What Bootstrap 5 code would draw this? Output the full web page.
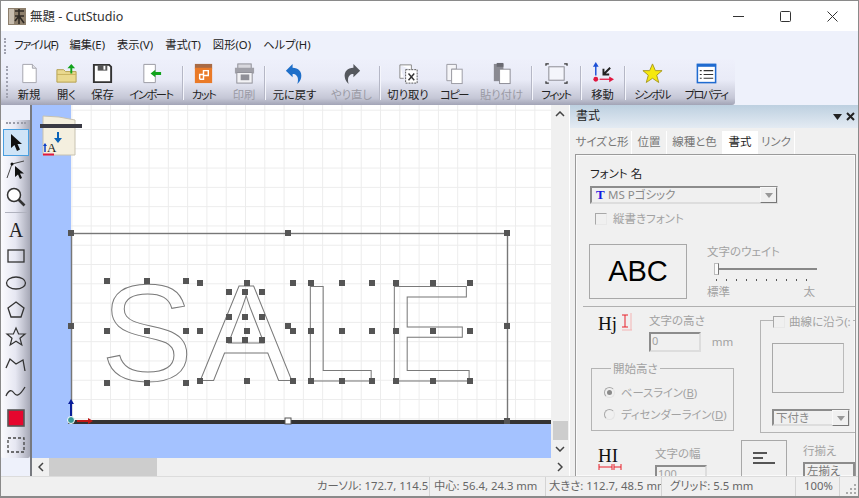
<!DOCTYPE html>
<html lang="ja">
<head>
    <meta charset="UTF-8">
    <title>無題 - CutStudio</title>
    <link href="https://cdn.jsdelivr.net/npm/bootstrap@5.3.2/dist/css/bootstrap.min.css" rel="stylesheet">
    <style>
        html, body { height: 100%; overflow: hidden; background: #fff; }
        body { font-family: "Noto Sans", "Noto Sans CJK JP", sans-serif; font-size: 11.5px; color: #222; line-height: 1.2; font-feature-settings: "palt"; }
        .app-win { width: 859px; height: 498px; border: 1px solid #8a8a8a; border-bottom-width: 2px; }
        .tight { letter-spacing: -1.5px; }

        .title-row { height: 30px; background: #fff; padding-left: 7px; font-size: 12.5px; color: #333; }
        .title-row .app-logo { margin-right: 4px; }
        .win-btns { margin-left: auto; margin-right: 2px; }
        .win-btn { width: 47px; height: 30px; }

        .menu-row { height: 28px; background: #eef1fb; padding-left: 13px; font-size: 11.3px; }
        .menu-row span { margin-right: 12px; }
        .menu-row .menu-first { letter-spacing: -1.200px; }
        .grip-v { width: 2px; height: 16px; margin: 0 2px; border-left: 2px dotted #a0a2b0; }
        .menu-row .grip-v { position: absolute; margin: 0; left: 4px; top: 38px; }

        .tool-zone { height: 46px; background: #eef1fb; }
        .tool-row { width: 734px; height: 46px; padding-left: 9px; padding-top: 3px; border-radius: 0 3px 3px 0; background: linear-gradient(#eef0fb 0%, #e9ebf7 45%, #c5c7d6 85%, #a2a4b6 100%); }
        .tool-row .grip-v { position: absolute; left: 4px; top: 66px; height: 32px; }
        .tool-btn { height: 43px; flex: none; font-size: 11.3px; }
        .tool-btn svg { height: 23px; width: 23px; margin-bottom: 3px; }
        .tool-btn.is-off { color: #9a9aa4; }
        .tool-sep { width: 1px; height: 34px; flex: none; margin-top: 4px; background: #b5b7c6; box-shadow: 1px 0 0 #f5f6fc; }
        .w35 { width: 35px; } .w36 { width: 36px; } .w37 { width: 37px; } .w38 { width: 38px; } .w40 { width: 40px; } .w41 { width: 41px; }
        .w43 { width: 43px; } .w48 { width: 48px; } .w54 { width: 54px; } .w55 { width: 55px; } .w56 { width: 56px; }
        .w59 { width: 59px; } .w62 { width: 62px; }

        .main-row { height: 371px; }
        .side-col { width: 31px; flex: none; border-right: 2px solid #77797f; background: #eef1fb; }
        .side-bar { margin-top: 15px; height: 338px; padding-top: 2px; background: linear-gradient(90deg, #fbfbfe 0%, #e6e7f2 50%, #a6a8b6 100%); border-radius: 0 0 2px 2px; }
        .side-btn { width: 26px; height: 27px; margin: 0 0 0 2px; flex: none; }
        .side-btn.is-on { background: #cfe4f7; border: 1px solid #4a9fe0; }
        .side-grip { width: 20px; height: 2px; margin: 0 0 5px 5px; border-top: 2px dotted #9a9ca8; }
        .side-sep { width: 22px; height: 1px; margin: 2px 0 2px 4px; background: #b0b2be; }

        .canvas-col { width: 537px; flex: none; background: #f0f0f0; }
        .canvas-top { height: 353px; }
        .draw-area { width: 519px; height: 353px; display: block; background: #fff; flex: none; }
        .scroll-v { width: 18px; flex: none; background: #f0f0f0; }
        .scroll-h { height: 18px; background: #f0f0f0; }
        .thumb-v { width: 15px; height: 19px; background: #cdcdcd; margin-top: auto; }
        .thumb-h { width: 108px; height: 18px; background: #cdcdcd; margin-left: -1px; }
        .arrow-btn { flex: none; width: 18px; height: 18px; }

        .prop-panel { width: 288px; flex: none; margin-left: 1px; background: #f0f0f0; font-size: 11.5px; overflow: hidden; }
        .prop-head { height: 23px; padding: 0 3px 0 6px; font-size: 12px; background: linear-gradient(#bdd0e0, #e4ebf3); }
        .prop-tabs { height: 26px; padding: 3px 0 0 3px; }
        .prop-tab { height: 23px; background: #f0f0f0; border-right: 1px solid #fff; color: #777; padding-top: 4px; text-align: center; }
        .prop-tab.is-on { background: #fff; color: #222; }
        .prop-body { height: 322px; margin-left: 5px; width: 281px; border: 1px solid #9a9a9a; border-bottom: 0; overflow: hidden; padding: 12px 0 0 14px; color: #a2a2a2; box-shadow: inset 0 0 0 1px #fafafa; }
        .dark-label { color: #222; margin-bottom: 5px; }
        .sunk-select { height: 18px; border: 2px solid #8c8c8c; border-right-color: #ddd; border-bottom-color: #ddd; background: #f0f0f0; padding-left: 2px; color: #8a8a8a; }
        .font-select { width: 188px; }
        .drop-btn { margin-left: auto; width: 17px; height: 16px; margin-right: -1px; border: 1px solid #f8f8f8; border-right-color: #777; border-bottom-color: #777; background: #f0f0f0; }
        .drop-btn i { display: block; margin: 5px auto 0; width: 0; height: 0; border: 4px solid transparent; border-top: 5px solid #999; border-bottom: 0; }
        .old-check { width: 12px; height: 12px; flex: none; border: 1px solid #a8a8a8; border-right-color: #e8e8e8; border-bottom-color: #e8e8e8; }
        .check-line { margin: 8px 0 0 5px; }
        .check-line .old-check { margin-right: 6px; }
        .abc-row { margin: 18px 0 0 -1px; }
        .abc-box { width: 98px; height: 55px; border: 1px solid #a8a8a8; flex: none; color: #000; font-family: "Liberation Sans", sans-serif; font-size: 29px; }
        .weight-col { width: 112px; margin-left: 20px; padding-top: 1px; }
        .weight-track { height: 2px; background: #888; margin: 10px 0 0 7px; position: relative; width: 103px; }
        .weight-knob { position: absolute; left: 0; top: -5px; width: 5px; height: 12px; background: #fbfbfb; border: 1px solid #bbb; border-right-color: #777; }
        .weight-ticks { height: 2px; margin: 9px 0 4px 9px; width: 100px; background: repeating-linear-gradient(90deg, #555 0 1px, transparent 1px 10px); }
        .panel-rule { height: 1px; width: 272px; margin: 7px 0 0 -7px; background: #b0b0b0; }
        .lower-grid { display: grid; grid-template-columns: 170px 100px; }
        .height-row { padding: 7px 0 0 8px; }
        .hj-icon { width: 36px; flex: none; margin: -4px 15px 0 0; }
        .num-box { width: 52px; height: 20px; border: 2px solid #8c8c8c; border-right-color: #ddd; border-bottom-color: #ddd; padding-left: 1px; margin-top: 4px; font-size: 11px; }
        .unit-text { margin: 21px 0 0 7px; }
        .old-group { border: 1px solid #b4b4b4; margin: 0; padding: 0; }
        .old-group legend { float: none; width: auto; font-size: 11.5px; line-height: 1; margin: 0 0 0 7px; padding: 0 2px; color: #a2a2a2; }
        .start-group { width: 143px; height: 68px; margin: 11px 0 0 1px; padding: 7px 0 0 12px; white-space: nowrap; }
        .radio-line { height: 22px; font-size: 11.3px; }
        .old-radio { width: 11px; height: 11px; border-radius: 50%; border: 1px solid #a8a8a8; border-right-color: #e4e4e4; border-bottom-color: #e4e4e4; margin-right: 6px; flex: none; position: relative; }
        .old-radio.is-set::after { content: ""; position: absolute; left: 2px; top: 2px; width: 5px; height: 5px; border-radius: 50%; background: #8a8a8a; }
        .curve-group { width: 130px; height: 113px; margin-top: 13px; margin-left: 0; padding: 22px 0 0 11px; position: relative; }
        .curve-head { position: absolute; left: 12px; top: -6px; background: #f0f0f0; padding-right: 2px; white-space: nowrap; }
        .curve-box { width: 72px; height: 50px; border: 1px solid #a8a8a8; border-right-color: #bbb; }
        .under-select { width: 78px; margin-top: 16px; height: 17px; }
        .lower-row { margin-top: 7px; }
        .hi-icon { width: 26px; margin: 2px 31px 0 8px; flex: none; }
        .width-col { width: 86px; padding-top: 7px; flex: none; }
        .align-btn { width: 46px; height: 60px; border: 1px solid #a8a8a8; flex: none; padding: 10px 0 0 11px; }
        .align-col { margin-left: 16px; padding-top: 4px; width: 60px; white-space: nowrap; }
        .sunk-mini { height: 20px; border: 2px solid #8c8c8c; border-bottom: 0; margin-top: 4px; padding-left: 2px; color: #777; }

        .status-row { height: 20px; background: #f0f0f0; border-top: 1px solid #dcdcdc; color: #666; font-size: 11.3px; white-space: nowrap; }
        .stat-cell { height: 100%; overflow: hidden; border-right: 1px solid #d4d4d4; flex: none; padding-top: 2px; }
        .stat-a { width: 429px; padding-left: 316px; }
        .stat-b { width: 116px; padding-left: 4px; }
        .stat-c { width: 116px; padding-left: 3px; }
        .stat-d { width: 134px; padding-left: 8px; }
        .stat-e { width: 44px; padding-left: 8px; }
        .size-grip { width: 12px; height: 12px; margin: 6px 0 0 5px; }
    </style>
</head>
<body>

    <div class="app-win d-flex flex-column">

        <!-- title bar -->
        <div class="title-row d-flex align-items-center">
            <svg class="app-logo" width="18" height="17" viewBox="0 0 18 17"><rect width="18" height="17" fill="#8d7f6c"/><rect x="1" y="1" width="5" height="15" fill="#c6bcae"/><path d="M7 3h9M11 1v15M7 8h9M7 13l4-5 5 7" stroke="#2f2a25" stroke-width="1.6" fill="none"/></svg>
            <span>無題 - CutStudio</span>
            <div class="win-btns d-flex">
                <div class="win-btn d-flex align-items-center justify-content-center"><svg width="11" height="11"><path d="M0 5.5h11" stroke="#333"/></svg></div>
                <div class="win-btn d-flex align-items-center justify-content-center"><svg width="11" height="11"><rect x=".5" y=".5" width="10" height="10" rx="1" fill="none" stroke="#333"/></svg></div>
                <div class="win-btn d-flex align-items-center justify-content-center"><svg width="11" height="11"><path d="M.5.5l10 10M10.5.5l-10 10" stroke="#333"/></svg></div>
            </div>
        </div>

        <!-- menu -->
        <div class="menu-row d-flex align-items-center">
            <div class="grip-v"></div>
            <span class="menu-first">ファイル(F)</span><span>編集(E)</span><span>表示(V)</span><span>書式(T)</span><span>図形(O)</span><span>ヘルプ(H)</span>
        </div>

        <!-- toolbar -->
        <div class="tool-zone">
            <div class="tool-row d-flex">
                <div class="grip-v"></div>
                <div class="tool-btn w38 d-flex flex-column align-items-center"><svg viewBox="0 0 24 24"><path d="M5 2.500h10l4 4v15H5z" fill="#fff" stroke="#a4a4ac"/><path d="M15 2.500v4h4" fill="#e4e4ea" stroke="#a4a4ac"/></svg>新規</div>
                <div class="tool-btn w37 d-flex flex-column align-items-center"><svg viewBox="0 0 24 24"><path d="M2 8h7l2 2h11v11H2z" fill="#ead98f" stroke="#b39f4e"/><path d="M2 13h20" stroke="#c8b25e"/><path d="M16 12V6.500h-3L17 2l4 4.500h-3V12z" fill="#12a31d"/></svg>開く</div>
                <div class="tool-btn w35 d-flex flex-column align-items-center"><svg viewBox="0 0 24 24"><path d="M3 3h16l2 2v16H3z" fill="#fff" stroke="#333" stroke-width="2"/><rect x="7" y="3" width="10" height="6" fill="#555"/><rect x="13" y="4" width="2" height="4" fill="#fff"/></svg>保存</div>
                <div class="tool-btn w62 d-flex flex-column align-items-center"><svg viewBox="0 0 24 24"><path d="M4 2.500h12v19H4z" fill="#fff" stroke="#9a9aa2"/><path d="M11 12l5-4v2.500h6v3h-6V16z" fill="#12a31d"/></svg><span class="tight">インポート</span></div>
                <div class="tool-sep"></div>
                <div class="tool-btn w41 d-flex flex-column align-items-center"><svg viewBox="0 0 24 24"><rect x="3" y="2" width="18" height="5" fill="#a86a45"/><rect x="3" y="6" width="18" height="16" fill="#ea7a28"/><path d="M8 18v-5h4v-4h5v5h-5M8 18h4v-5" fill="none" stroke="#fff" stroke-width="1.500"/></svg><span class="tight">カット</span></div>
                <div class="tool-btn w40 is-off d-flex flex-column align-items-center"><svg viewBox="0 0 24 24"><rect x="5" y="2" width="14" height="5" fill="#d8d8de" stroke="#8e8e96"/><rect x="2" y="6" width="20" height="6" fill="#a0a0a8"/><rect x="4" y="11" width="16" height="11" fill="#f2f2f5" stroke="#8e8e96"/><rect x="8" y="13" width="9" height="6" fill="#8f8f97"/></svg>印刷</div>
                <div class="tool-sep"></div>
                <div class="tool-btn w59 d-flex flex-column align-items-center"><svg viewBox="0 0 24 24"><path d="M3 9l7-7v4c6 0 10 4 9 10-.4 3-2 5-4 7 1-4 1-7-1-9-1-1-2-1.500-4-1.500V16z" fill="#1f6fc9"/></svg>元に戻す</div>
                <div class="tool-btn w55 is-off d-flex flex-column align-items-center"><svg viewBox="0 0 24 24"><path d="M21 9l-7-7v4C8 6 4 10 5 16c.4 3 2 5 4 7-1-4-1-7 1-9 1-1 2-1.500 4-1.500V16z" fill="#55585e"/></svg>やり直し</div>
                <div class="tool-sep"></div>
                <div class="tool-btn w56 d-flex flex-column align-items-center"><svg viewBox="0 0 24 24"><path d="M3 3h12v5M3 3v14h4" fill="#fff" stroke="#888"/><rect x="9" y="8" width="12" height="14" fill="#fff" stroke="#555" stroke-dasharray="2 1"/><path d="M12 12l6 7M18 12l-6 7" stroke="#333" stroke-width="1.500"/></svg><span>切り取り</span></div>
                <div class="tool-btn w36 d-flex flex-column align-items-center"><svg viewBox="0 0 24 24"><path d="M4 2.500h10v5H9v12H4z" fill="#f5f5f8" stroke="#9a9aa2"/><rect x="9" y="7.500" width="11" height="15" fill="#fff" stroke="#9a9aa2"/></svg><span class="tight">コピー</span></div>
                <div class="tool-btn w59 is-off d-flex flex-column align-items-center"><svg viewBox="0 0 24 24"><rect x="4" y="2" width="10" height="18" fill="#8a8a92"/><rect x="7" y="1" width="7" height="4" fill="#6a6a72"/><rect x="10" y="7.500" width="11" height="15" fill="#fff" stroke="#8a8a92"/></svg>貼り付け</div>
                <div class="tool-sep"></div>
                <div class="tool-btn w48 d-flex flex-column align-items-center"><svg viewBox="0 0 24 24"><rect x="4" y="5" width="16" height="14" fill="#f4f5fb" stroke="#8a8a92"/><path d="M1 4V2h3M20 2h3v2M1 20v2h3M20 22h3v-2" fill="none" stroke="#333" stroke-width="1.300"/></svg><span class="tight">フィット</span></div>
                <div class="tool-sep"></div>
                <div class="tool-btn w43 d-flex flex-column align-items-center"><svg viewBox="0 0 24 24"><path d="M5 14V4" stroke="#1b4fd6" stroke-width="1.500"/><path d="M5 0l-3 5h6z" fill="#1b4fd6"/><circle cx="5" cy="18" r="2.500" fill="#e0173f"/><path d="M9 18h11" stroke="#e0173f" stroke-width="1.300"/><path d="M24 18l-5-3v6z" fill="#e0173f"/><path d="M20 6l-6 6M13 7v6h6" fill="none" stroke="#222" stroke-width="2"/></svg>移動</div>
                <div class="tool-sep"></div>
                <div class="tool-btn w54 d-flex flex-column align-items-center"><svg viewBox="0 0 24 24"><path d="M12 2l3 7h7l-5.600 4.800 2.100 7.600L12 17l-6.500 4.400 2.100-7.600L2 9h7z" fill="#f6e90e" stroke="#a89a20"/></svg><span class="tight">シンボル</span></div>
                <div class="tool-btn w54 d-flex flex-column align-items-center"><svg viewBox="0 0 24 24"><rect x="2.500" y="2.500" width="19" height="19" fill="#fff" stroke="#1f6bd0" stroke-width="1.600"/><rect x="2" y="2" width="20" height="3" fill="#1f6bd0"/><path d="M5 9h2M9 9h10M5 13h2M9 13h10M5 17h2M9 17h10" stroke="#333" stroke-width="1.200"/></svg><span class="tight">プロパティ</span></div>
            </div>
        </div>

        <div class="main-row d-flex">
            <!-- left tool column -->
            <div class="side-col">
                <div class="side-bar d-flex flex-column">
                    <div class="side-grip"></div>
                    <div class="side-btn is-on d-flex align-items-center justify-content-center"><svg width="18" height="20" viewBox="0 0 18 20"><path d="M4 1v14l3.500-3 2.500 6 3-1.500-2.500-5.500H15z" fill="#111"/></svg></div>
                    <div class="side-btn d-flex align-items-center justify-content-center"><svg width="24" height="24" viewBox="0 0 24 24"><path d="M3 20L8 6l12-3" fill="none" stroke="#444"/><circle cx="8" cy="6" r="1.500" fill="#111"/><path d="M11 8v11l3-2.500 2 4.500 2-1-2-4.500h4z" fill="#111"/></svg></div>
                    <div class="side-btn d-flex align-items-center justify-content-center"><svg width="22" height="22" viewBox="0 0 22 22"><circle cx="9" cy="9" r="6.500" fill="#fff" stroke="#333" stroke-width="1.500"/><path d="M13.500 13.500l6 6" stroke="#333" stroke-width="2.600"/></svg></div>
                    <div class="side-sep"></div>
                    <div class="side-btn d-flex align-items-center justify-content-center"><svg width="24" height="24" viewBox="0 0 24 24"><text x="12" y="20" text-anchor="middle" font-family="Liberation Serif, serif" font-size="20" fill="#222">A</text></svg></div>
                    <div class="side-btn d-flex align-items-center justify-content-center"><svg width="20" height="16" viewBox="0 0 20 16"><rect x="2" y="2" width="16" height="12" fill="none" stroke="#333" stroke-width="1.300"/></svg></div>
                    <div class="side-btn d-flex align-items-center justify-content-center"><svg width="22" height="16" viewBox="0 0 22 16"><ellipse cx="11" cy="8" rx="9.500" ry="6" fill="none" stroke="#333" stroke-width="1.300"/></svg></div>
                    <div class="side-btn d-flex align-items-center justify-content-center"><svg width="20" height="20" viewBox="0 0 20 20"><path d="M10 2l8 6-3 9H5L2 8z" fill="none" stroke="#333" stroke-width="1.300"/></svg></div>
                    <div class="side-btn d-flex align-items-center justify-content-center"><svg width="22" height="22" viewBox="0 0 22 22"><path d="M11 2l2.600 6H20l-5 4.200 1.800 6.800L11 15.200 5.200 19 7 12.200 2 8h6.400z" fill="none" stroke="#333" stroke-width="1.200"/></svg></div>
                    <div class="side-btn d-flex align-items-center justify-content-center"><svg width="22" height="20" viewBox="0 0 22 20"><path d="M1 14L5 5l6 5 7-4 2 11" fill="none" stroke="#333" stroke-width="1.300"/></svg></div>
                    <div class="side-btn d-flex align-items-center justify-content-center"><svg width="22" height="16" viewBox="0 0 22 16"><path d="M1 13c3-7 6-6 8-3s5 4 11-6" fill="none" stroke="#333" stroke-width="1.300"/></svg></div>
                    <div class="side-btn d-flex align-items-center justify-content-center"><svg width="18" height="18" viewBox="0 0 18 18"><rect x="1" y="1" width="16" height="16" fill="#e6062e" stroke="#555" stroke-width="1.600"/></svg></div>
                    <div class="side-btn d-flex align-items-center justify-content-center"><svg width="18" height="16" viewBox="0 0 18 16"><rect x="1" y="1" width="16" height="14" fill="none" stroke="#444" stroke-width="1.300" stroke-dasharray="3 2"/></svg></div>
                </div>
            </div>

            <!-- drawing area and scrollbars -->
            <div class="canvas-col d-flex flex-column">
                <div class="canvas-top d-flex">
                    <svg id="drawArea" class="draw-area" viewBox="32 105 519 353">
                        <defs>
                            <pattern id="gridCell" x="71.4" y="129" width="19.29" height="19.29" patternUnits="userSpaceOnUse">
                                <path d="M0 0V19.290M0 0H19.290" stroke="#ececec" stroke-width="2" fill="none"/>
                            </pattern>
                        </defs>
                        <rect x="32" y="105" width="519" height="353" fill="url(#gridCell)"/>
                        <rect x="32" y="105" width="39" height="353" fill="#a4c2ff"/>
                        <rect x="32" y="424" width="519" height="34" fill="#a4c2ff"/>

                        <!-- plotter mark -->
                        <path d="M43 116l16 1 16 3v35H43z" fill="#f4efdf" stroke="#c8c2b0"/>
                        <rect x="40" y="124" width="42" height="4" fill="#3a3a44"/>
                        <path d="M57 132v6h-3l4 5 4-5h-3v-6z" fill="#0a63b8"/>
                        <text x="47" y="152" font-family="Liberation Serif, serif" font-size="13" fill="#222">A</text>
                        <path d="M45 152v-7" stroke="#0a3ec8" stroke-width="1.500"/>
                        <path d="M45 143l-2 3h4z" fill="#0a3ec8"/>
                        <path d="M43 154.500h11" stroke="#e0173f" stroke-width="2"/>

                        <!-- selection frame -->
                        <rect x="71.500" y="233.500" width="436" height="188" fill="none" stroke="#777" stroke-width="1.400"/>
                        <rect x="71" y="420" width="480" height="4" fill="#333"/>

                        <!-- text object -->
                        <text x="101 200 299 383" y="381" font-family="Liberation Sans, sans-serif" font-size="138" fill="none" stroke="#7a7a7a" stroke-width="1">SALE</text>

                        <g id="handleLayer" fill="#555"></g>

                        <!-- origin arrows -->
                        <path d="M71 417v-14" stroke="#0b1f9a" stroke-width="2"/>
                        <path d="M71 399l-3 5h6z" fill="#0b1f9a"/>
                        <path d="M77 421h13" stroke="#c01818" stroke-width="2"/>
                        <path d="M93 421l-5-3v6z" fill="#c01818"/>
                        <circle cx="71" cy="420" r="3.500" fill="#3a9a9a" stroke="#fff"/>
                        <rect x="285" y="418" width="6" height="6" fill="#fff" stroke="#555"/>
                    </svg>
                    <div class="scroll-v d-flex flex-column align-items-center">
                        <div class="arrow-btn d-flex align-items-center justify-content-center"><svg width="10" height="6"><path d="M1 5l4-4 4 4" fill="none" stroke="#444" stroke-width="1.500"/></svg></div>
                        <div class="thumb-v"></div>
                        <div class="arrow-btn d-flex align-items-center justify-content-center"><svg width="10" height="6"><path d="M1 1l4 4 4-4" fill="none" stroke="#444" stroke-width="1.500"/></svg></div>
                    </div>
                </div>
                <div class="scroll-h d-flex align-items-center">
                    <div class="arrow-btn d-flex align-items-center justify-content-center"><svg width="6" height="10"><path d="M5 1L1 5l4 4" fill="none" stroke="#444" stroke-width="1.500"/></svg></div>
                    <div class="thumb-h"></div>
                    <div class="arrow-btn ms-auto d-flex align-items-center justify-content-center"><svg width="6" height="10"><path d="M1 1l4 4-4 4" fill="none" stroke="#444" stroke-width="1.500"/></svg></div>
                </div>
            </div>

            <!-- property panel -->
            <div class="prop-panel">
                <div class="prop-head d-flex align-items-center">
                    <span>書式</span>
                    <svg class="ms-auto me-1" width="9" height="6"><path d="M0 0h9L4.500 6z" fill="#222"/></svg>
                    <svg width="9" height="9"><path d="M1 1l7 7M8 1L1 8" stroke="#222" stroke-width="2"/></svg>
                </div>
                <div class="prop-tabs d-flex">
                    <div class="prop-tab w59">サイズと形</div>
                    <div class="prop-tab w35">位置</div>
                    <div class="prop-tab w56">線種と色</div>
                    <div class="prop-tab is-on w35">書式</div>
                    <div class="prop-tab w37">リンク</div>
                </div>
                <div class="prop-body">
                    <div class="dark-label">フォント 名</div>
                    <div class="sunk-select font-select d-flex align-items-center">
                        <svg width="14" height="14" viewBox="0 0 14 14"><text x="2" y="11" font-family="Liberation Serif, serif" font-size="13" font-weight="bold" fill="#1616e0">T</text></svg>
                        <span>MS Pゴシック</span>
                        <div class="drop-btn"><i></i></div>
                    </div>
                    <div class="check-line d-flex align-items-center">
                        <div class="old-check"></div><span>縦書きフォント</span>
                    </div>
                    <div class="abc-row d-flex">
                        <div class="abc-box d-flex align-items-center justify-content-center">ABC</div>
                        <div class="weight-col">
                            <div>文字のウェイト</div>
                            <div class="weight-track"><div class="weight-knob"></div></div>
                            <div class="weight-ticks"></div>
                            <div class="d-flex justify-content-between pe-1"><span>標準</span><span>太</span></div>
                        </div>
                    </div>
                    <div class="panel-rule"></div>
                    <div class="lower-grid">
                        <div>
                            <div class="height-row d-flex">
                                <svg class="hj-icon" height="26" viewBox="0 0 36 26"><text x="0" y="20" font-family="Liberation Serif, serif" font-size="19" fill="#111">Hj</text><path d="M24 5h6M27 5v12M24 17h6" stroke="#e8202a" fill="none"/><path d="M24 20h10M33 3v17" stroke="#f4b4b4" fill="none"/></svg>
                                <div>
                                    <div>文字の高さ</div>
                                    <div class="num-box">0</div>
                                </div>
                                <div class="unit-text">mm</div>
                            </div>
                            <fieldset class="old-group start-group">
                                <legend>開始高さ</legend>
                                <div class="radio-line d-flex align-items-center"><span class="old-radio is-set"></span><span>ベースライン(<u>B</u>)</span></div>
                                <div class="radio-line d-flex align-items-center"><span class="old-radio"></span><span>ディセンダーライン(<u>D</u>)</span></div>
                            </fieldset>
                        </div>
                        <div class="old-group curve-group">
                            <div class="curve-head d-flex align-items-center"><div class="old-check me-1"></div><span>曲線に沿う(:</span></div>
                            <div class="curve-box"></div>
                            <div class="sunk-select under-select d-flex align-items-center"><span>下付き</span><div class="drop-btn"><i></i></div></div>
                        </div>
                    </div>
                    <div class="lower-row d-flex">
                        <svg class="hi-icon" height="28" viewBox="0 0 26 28"><text x="0" y="20" font-family="Liberation Serif, serif" font-size="19" fill="#111">HI</text><path d="M1 22v6M1 25h13M14 22v6M16 22v6M16 25h7M23 22v6" stroke="#e8202a" fill="none"/></svg>
                        <div class="width-col">
                            <div>文字の幅</div>
                            <div class="num-box">100</div>
                        </div>
                        <div class="align-btn"><svg width="22" height="14"><path d="M0 1h14M0 6h10M0 11h22" stroke="#222" stroke-width="1.500"/></svg></div>
                        <div class="align-col">
                            <div>行揃え</div>
                            <div class="sunk-mini">左揃え</div>
                        </div>
                    </div>
                </div>
            </div>
        </div>

        <!-- status bar -->
        <div class="status-row d-flex">
            <div class="stat-cell stat-a">カーソル: 172.7, 114.5 mm</div>
            <div class="stat-cell stat-b">中心: 56.4, 24.3 mm</div>
            <div class="stat-cell stat-c">大きさ: 112.7, 48.5 mm</div>
            <div class="stat-cell stat-d">グリッド: 5.5 mm</div>
            <div class="stat-cell stat-e">100%</div>
            <svg class="size-grip" viewBox="0 0 12 12"><path d="M9 1h2v2H9zM5 5h2v2H5zM9 5h2v2H9zM1 9h2v2H1zM5 9h2v2H5zM9 9h2v2H9z" fill="#aaa"/></svg>
        </div>
    </div>

    <script src="https://cdn.jsdelivr.net/npm/bootstrap@5.3.2/dist/js/bootstrap.bundle.min.js"></script>
    <script>
        // handle squares on the selected text
        const handles = [
            [71, 233], [288, 233], [507, 233], [71, 326], [507, 326], [71, 421], [507, 421],
            [107, 281], [147, 281], [186, 281], [107, 331], [147, 331], [186, 331], [107, 383], [147, 383], [186, 383],
            [200, 283], [247, 283], [293, 283], [200, 331], [247, 331], [293, 331], [200, 381], [247, 381], [293, 381],
            [229, 292], [245, 292], [262, 292], [229, 317], [245, 317], [262, 317], [229, 340], [245, 340], [262, 340], [288, 326],
            [311, 283], [342, 283], [372, 283], [311, 331], [342, 331], [372, 331], [311, 381], [342, 381], [372, 381],
            [396, 283], [433, 283], [470, 283], [396, 331], [433, 331], [470, 331], [396, 381], [433, 381], [470, 381]
        ];
        const layer = document.getElementById('handleLayer');
        handles.forEach(([x, y]) => {
            const r = document.createElementNS('http://www.w3.org/2000/svg', 'rect');
            r.setAttribute('x', x - 3);
            r.setAttribute('y', y - 3);
            r.setAttribute('width', 6);
            r.setAttribute('height', 6);
            layer.appendChild(r);
        });
    </script>
</body>
</html>
